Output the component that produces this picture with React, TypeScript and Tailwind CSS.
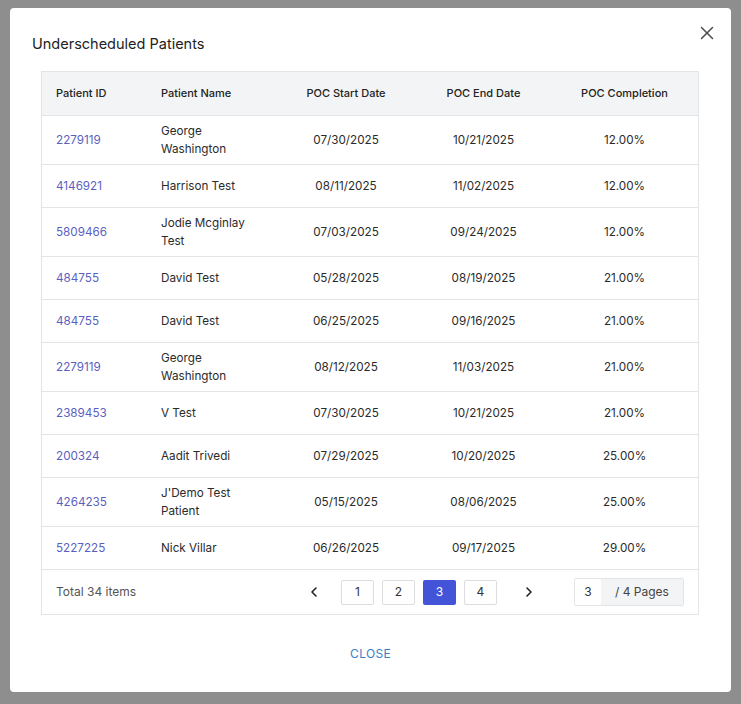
import { X, ChevronLeft, ChevronRight } from 'lucide-react';

type Row = {
  id: string;
  name: string;
  start: string;
  end: string;
  completion: string;
};

const rows: Row[] = [
  { id: '2279119', name: 'George Washington', start: '07/30/2025', end: '10/21/2025', completion: '12.00%' },
  { id: '4146921', name: 'Harrison Test', start: '08/11/2025', end: '11/02/2025', completion: '12.00%' },
  { id: '5809466', name: 'Jodie Mcginlay Test', start: '07/03/2025', end: '09/24/2025', completion: '12.00%' },
  { id: '484755', name: 'David Test', start: '05/28/2025', end: '08/19/2025', completion: '21.00%' },
  { id: '484755', name: 'David Test', start: '06/25/2025', end: '09/16/2025', completion: '21.00%' },
  { id: '2279119', name: 'George Washington', start: '08/12/2025', end: '11/03/2025', completion: '21.00%' },
  { id: '2389453', name: 'V Test', start: '07/30/2025', end: '10/21/2025', completion: '21.00%' },
  { id: '200324', name: 'Aadit Trivedi', start: '07/29/2025', end: '10/20/2025', completion: '25.00%' },
  { id: '4264235', name: "J'Demo Test Patient", start: '05/15/2025', end: '08/06/2025', completion: '25.00%' },
  { id: '5227225', name: 'Nick Villar', start: '06/26/2025', end: '09/17/2025', completion: '29.00%' },
];

const pages = [1, 2, 3, 4];

export default function App() {
  const current = 3;

  return (
    <div className="min-h-[704px] w-full bg-[#8e8e8e] pt-2 pl-[10px] font-['Inter',sans-serif]">
      <div className="flex h-[684px] w-[721px] flex-col rounded-[4px] bg-white">
        {/* header */}
        <div className="flex items-start justify-between pl-[22px] pr-[13px]">
          <h2 className="mt-[27px] text-[14.5px] leading-[18px] text-[#222]">Underscheduled Patients</h2>
          <button className="mt-[14px] text-[#4a4a4a]">
            <X size={22} strokeWidth={1.6} />
          </button>
        </div>

        <div className="mt-[18px] ml-[31px] w-[658px] border border-[#e3e4e6]">
          <table className="w-full table-fixed border-collapse text-[11.7px] leading-[18px] text-[#2b2b2b]">
            <colgroup>
              <col className="w-[104px]" />
              <col className="w-[130px]" />
              <col className="w-[140px]" />
              <col className="w-[135px]" />
              <col />
            </colgroup>
            <thead>
              <tr className="h-[43px] bg-[#f3f4f5] text-[11px] text-[#222]">
                <th className="pl-[14px] text-left font-medium">Patient ID</th>
                <th className="pl-[15px] text-left font-medium">Patient Name</th>
                <th className="text-center font-medium">POC Start Date</th>
                <th className="text-center font-medium">POC End Date</th>
                <th className="text-center font-medium">POC Completion</th>
              </tr>
            </thead>
            <tbody>
              {rows.map((r, i) => (
                <tr key={i} className="h-[43px] border-t border-[#e3e4e6]">
                  <td className="py-[6px] pl-[14px] text-[#5a5fbf]">{r.id}</td>
                  <td className="py-[6px] pl-[15px] pr-[10px]">{r.name}</td>
                  <td className="py-[6px] text-center">{r.start}</td>
                  <td className="py-[6px] text-center">{r.end}</td>
                  <td className="py-[6px] text-center">{r.completion}</td>
                </tr>
              ))}
            </tbody>
          </table>

          {/* pagination */}
          <div className="flex h-[45px] items-center border-t border-[#e3e4e6] pl-[14px] pr-[14px] text-[12px] text-[#444]">
            <span className="text-[#555]">Total 34 items</span>
            <div className="ml-auto flex items-center">
              <button className="mr-[19px] text-[#222]">
                <ChevronLeft size={16} strokeWidth={2.4} />
              </button>
              <div className="flex gap-[8px]">
                {pages.map((p) => (
                  <button
                    key={p}
                    className={
                      p === current
                        ? 'h-[25px] w-[33px] rounded-[2px] bg-[#4354d9] text-white'
                        : 'h-[25px] w-[33px] rounded-[2px] border border-[#dcdde0] bg-white text-[#333]'
                    }
                  >
                    {p}
                  </button>
                ))}
              </div>
              <button className="ml-[24px] text-[#222]">
                <ChevronRight size={16} strokeWidth={2.4} />
              </button>
              <div className="ml-[37px] flex h-[28px] items-center overflow-hidden rounded-[2px] border border-[#e3e4e6]">
                <span className="flex h-full w-[26px] items-center justify-center bg-white text-[#333]">3</span>
                <span className="flex h-full w-[82px] items-center justify-center bg-[#f3f4f5] text-[#444]">/ 4 Pages</span>
              </div>
            </div>
          </div>
        </div>

        <div className="mt-[30px] flex justify-center">
          <button className="text-[12px] tracking-[0.3px] text-[#3a7fc4]">CLOSE</button>
        </div>
      </div>
    </div>
  );
}
